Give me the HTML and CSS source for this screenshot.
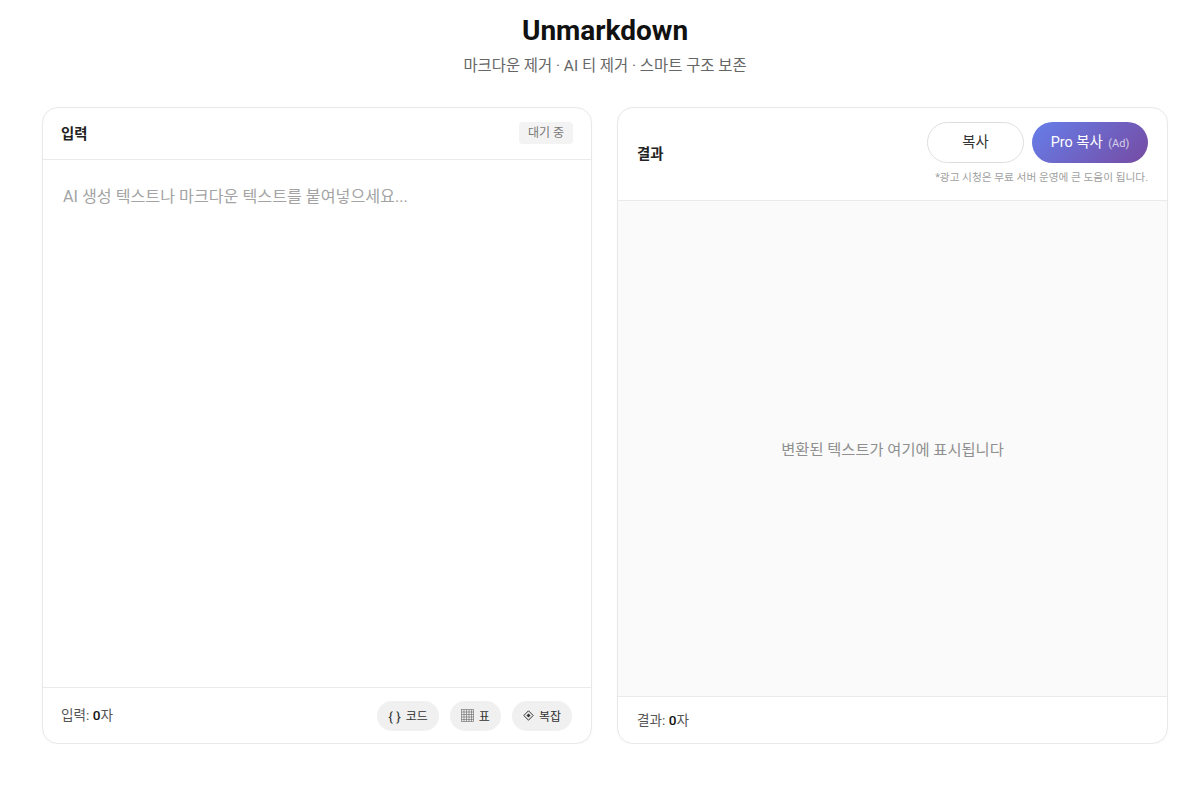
FILE: index.html
```html
<!DOCTYPE html>
<html lang="ko">

<head>
    <meta charset="UTF-8">
    <meta name="viewport" content="width=device-width, initial-scale=1.0">
    <title>Unmarkdown</title>
    <link rel="stylesheet" href="styles.css">
</head>

<body>
    <header class="page-header">
        <h1>Unmarkdown</h1>
        <p>마크다운 제거 · AI 티 제거 · 스마트 구조 보존</p>
    </header>

    <main class="panels">
        <section class="panel">
            <div class="panel-head input-head">
                <h2>입력</h2>
                <span class="status">대기 중</span>
            </div>
            <div class="input-body">
                <div class="placeholder">AI 생성 텍스트나 마크다운 텍스트를 붙여넣으세요...</div>
            </div>
            <div class="panel-foot input-foot">
                <div class="count">입력: <b>0</b>자</div>
                <div class="chips">
                    <button class="chip"><span class="chip-icon">{ }</span> 코드</button>
                    <button class="chip">
                        <svg class="grid-icon" width="13" height="13" viewBox="0 0 13 13" fill="none" stroke="#777" stroke-width="0.7">
                            <rect x="0.5" y="0.5" width="12" height="12" />
                            <path d="M3 0.5V12.5M5.5 0.5V12.5M8 0.5V12.5M10.5 0.5V12.5M0.5 3H12.5M0.5 5.5H12.5M0.5 8H12.5M0.5 10.5H12.5" />
                        </svg>
                        표
                    </button>
                    <button class="chip">
                        <svg width="11" height="11" viewBox="0 0 11 11" fill="none" stroke="#333" stroke-width="1">
                            <path d="M5.5 0.8L10.2 5.5L5.5 10.2L0.8 5.5Z" />
                            <path d="M5.5 3.4L7.6 5.5L5.5 7.6L3.4 5.5Z" fill="#333" stroke="none" />
                        </svg>
                        복잡
                    </button>
                </div>
            </div>
        </section>

        <section class="panel">
            <div class="panel-head result-head">
                <h2>결과</h2>
                <div class="actions">
                    <div class="action-buttons">
                        <button class="btn btn-copy">복사</button>
                        <button class="btn btn-pro">Pro 복사 <small>(Ad)</small></button>
                    </div>
                    <div class="ad-note">*광고 시청은 무료 서버 운영에 큰 도움이 됩니다.</div>
                </div>
            </div>
            <div class="result-body"><span class="result-empty">변환된 텍스트가 여기에 표시됩니다</span></div>
            <div class="panel-foot result-foot">
                <div class="count">결과: <b>0</b>자</div>
            </div>
        </section>
    </main>
</body>

</html>
```

FILE: styles.css
```css
* {
    box-sizing: border-box;
}

body {
    margin: 0;
    background-color: white;
    color: #111;
    font-family: Roboto, "Noto Sans CJK KR", sans-serif;
}

.page-header {
    text-align: center;
    padding: 13px 0 0 10px;
    height: 107px;
}

.page-header h1 {
    margin: 0;
    font-size: 28px;
    line-height: 36px;
    font-weight: 700;
}

.page-header p {
    margin: 4px 0 0;
    font-size: 15.4px;
    line-height: 26px;
    color: #666;
}

.panels {
    display: grid;
    grid-template-columns: 550px 551px;
    gap: 25px;
    padding-left: 42px;
}

.panel {
    display: flex;
    flex-direction: column;
    height: 637px;
    border: 1px solid #e8e8e8;
    border-radius: 16px;
    overflow: hidden;
    box-shadow: 0 1px 3px rgba(0, 0, 0, 0.03);
}

.panel-head,
.panel-foot {
    display: flex;
    align-items: center;
    justify-content: space-between;
    flex-shrink: 0;
}

.panel-head {
    border-bottom: 1px solid #eaeaea;
}

.panel-head h2 {
    margin: 0 0 3px;
    font-size: 14.4px;
    font-weight: 700;
    color: #222;
}

.input-head {
    height: 52px;
    padding: 0 18px;
}

.result-head {
    height: 93px;
    padding: 0 19px;
}

.status {
    padding: 0 9px;
    height: 22px;
    line-height: 22px;
    margin-bottom: 2px;
    font-size: 12px;
    color: #777;
    background-color: #f3f3f3;
    border-radius: 4px;
}

.input-body {
    flex: 1;
    padding: 25px 20px;
}

.placeholder {
    font-size: 16.15px;
    line-height: 24px;
    color: #a3a3a3;
}

.result-body {
    flex: 1;
    display: flex;
    align-items: center;
    justify-content: center;
    background-color: #fafafa;
}

.result-empty {
    margin-bottom: 2px;
    font-size: 15.3px;
    color: #8f8f8f;
}

.panel-foot {
    border-top: 1px solid #eaeaea;
    padding: 0 19px 0 18px;
}

.input-foot {
    height: 56px;
}

.input-foot .count {
    margin-bottom: 4px;
}

.result-foot {
    height: 47px;
    padding-left: 19px;
}

.count {
    margin-bottom: 2px;
    font-size: 13.6px;
    color: #555;
}

.count b {
    font-weight: 500;
    color: #111;
}

.chips {
    display: flex;
    gap: 11px;
}

.chip {
    display: flex;
    align-items: center;
    gap: 5px;
    height: 30px;
    padding: 0 11px;
    border: none;
    border-radius: 15px;
    background-color: #f0f0f0;
    color: #333;
    font-family: inherit;
    font-size: 12px;
}

.chip-icon {
    font-size: 13.5px;
}

.actions {
    display: flex;
    flex-direction: column;
    align-items: flex-end;
    gap: 8px;
    margin-bottom: 2px;
}

.action-buttons {
    display: flex;
    gap: 8px;
}

.btn {
    height: 41px;
    border-radius: 21px;
    padding: 0 0 3px;
    font-family: inherit;
    font-size: 14.4px;
}

.btn-copy {
    width: 97px;
    background-color: white;
    border: 1px solid #dedede;
    color: #333;
}

.btn-pro {
    width: 116px;
    border: none;
    color: white;
    background: linear-gradient(135deg, #667eea, #764ba2);
}

.btn-pro small {
    font-size: 11px;
    opacity: 0.7;
    margin-left: 2px;
}

.ad-note {
    font-size: 10.7px;
    line-height: 14px;
    color: #a0a0a0;
}
```
